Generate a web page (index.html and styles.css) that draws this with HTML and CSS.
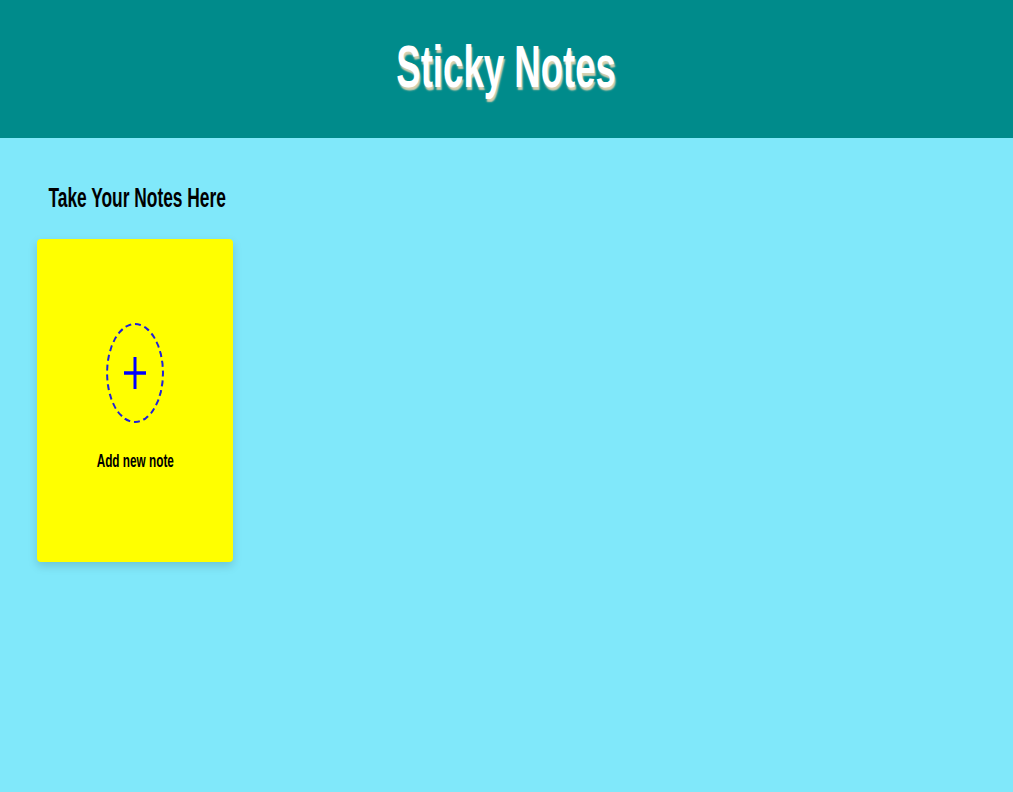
FILE: index.html
```html
<!DOCTYPE html>
<html>
<head>
<meta charset="utf-8">
<link rel="stylesheet" href="styles.css">
</head>
<body>
<header class="top">
  <h1 class="title"><span class="narrow">Sticky Notes</span></h1>
</header>
<main class="board">
  <section class="column">
    <h2 class="subtitle"><span class="narrow">Take Your Notes Here</span></h2>
    <div class="note add-note">
      <div class="ring">
        <svg class="plus" width="24" height="34" viewBox="0 0 24 34">
          <line x1="12" y1="1" x2="12" y2="33" stroke="#0000ff" stroke-width="3"/>
          <line x1="1" y1="17" x2="23" y2="17" stroke="#0000ff" stroke-width="3.5"/>
        </svg>
      </div>
      <p class="add-label"><span class="narrow">Add new note</span></p>
    </div>
  </section>
</main>
</body>
</html>
```
FILE: styles.css
```css
html, body {
  margin: 0;
  padding: 0;
}
body {
  background: #80e8fa;
  font-family: "Liberation Sans", Arial, sans-serif;
  min-height: 792px;
}
.narrow {
  display: inline-block;
  transform: scaleX(0.62);
  transform-origin: center;
  white-space: nowrap;
}
.top {
  height: 138px;
  background: #008b8b;
  display: flex;
  align-items: center;
  justify-content: center;
}
.title {
  margin: 0;
  font-size: 59px;
  font-weight: bold;
  color: #ffffff;
  text-shadow: 2px 3px 2px #d8d0b0;
  line-height: 1;
  padding-bottom: 4px;
}
.board {
  padding: 0 37px;
}
.column {
  width: 196px;
  display: flex;
  flex-direction: column;
  align-items: center;
}
.subtitle {
  margin: 44px 0 0;
  padding-left: 5px;
  height: 57px;
  font-size: 28px;
  font-weight: bold;
  color: #000;
  line-height: 31px;
}
.note {
  width: 196px;
  height: 323px;
  background: #ffff00;
  border-radius: 4px;
  box-shadow: 0 4px 10px rgba(0, 0, 0, 0.15);
  box-sizing: border-box;
}
.add-note {
  display: flex;
  flex-direction: column;
  align-items: center;
  padding-top: 84px;
}
.ring {
  width: 58px;
  height: 100px;
  box-sizing: border-box;
  border: 2px dashed #2020d8;
  border-radius: 50%;
  display: flex;
  align-items: center;
  justify-content: center;
}
.add-label {
  margin: 26px 0 0;
  font-size: 19px;
  font-weight: bold;
  color: #000;
  line-height: 24px;
}
```
